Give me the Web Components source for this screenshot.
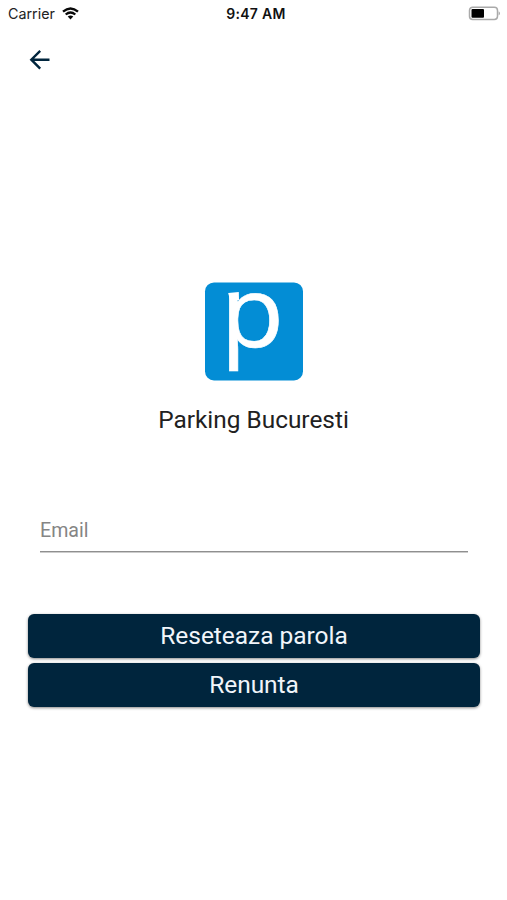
<!DOCTYPE html>
<html lang="ro"><head><meta charset="utf-8"><title>Parking Bucuresti</title>
<style>html,body{margin:0;height:100%;background:#fff}</style></head><body>
<reset-screen></reset-screen>
<script>
const define=(name,html)=>customElements.define(name,class extends HTMLElement{
  constructor(){super();this.attachShadow({mode:'open'}).innerHTML=html;}
});
define('status-bar',`<style>
:host{display:grid;grid-template-columns:1fr auto 1fr;height:27px;align-items:center;font:14.3px/27px Inter,sans-serif;color:#222;padding:0 6px 0 8px;box-sizing:border-box}
.left{display:flex;align-items:center;gap:7px}.time{font-weight:600;font-size:14px;letter-spacing:.3px;color:#111;padding-left:3px}
.right{display:flex;justify-content:flex-end}svg{display:block}
</style><div class="left"><span>Carrier</span><svg width="17" height="13" viewBox="0 0 17 13" fill="none" stroke="#080808" stroke-width="2.3"><path d="M1 4.7Q8.5-1.8 16 4.7M3.7 7.5Q8.5 3.4 13.3 7.5"/><path d="M8.5 12.4L5.7 9.5Q8.5 7.4 11.3 9.5Z" fill="#080808" stroke="none"/></svg></div>
<span class="time">9:47 AM</span>
<div class="right"><svg width="33" height="15" viewBox="0 0 33 15"><rect x="1.5" y="1.2" width="28" height="12.3" rx="3.2" fill="#fff" stroke="#aaa" stroke-width="1.5"/><rect x="3.5" y="3.1" width="12.5" height="8.6" rx="1" fill="#000"/><path d="M30.7 5.2Q33 7.4 30.7 9.5Z" fill="#999"/></svg></div>`);
define('back-button',`<style>:host{display:flex;height:65px;padding-left:28px;align-items:center;box-sizing:border-box}button{padding:0;border:0;background:none}svg{display:block}</style>
<button aria-label="Inapoi"><svg width="24" height="24" viewBox="0 0 24 24" fill="none" stroke="#00253d" stroke-width="2.4"><path d="M21.5 11.7H3.5M12.2 2.8L3.3 11.7l8.9 8.9"/></svg></button>`);
define('parking-logo',`<style>:host{display:block;width:98px;height:98px}svg{display:block;overflow:visible}text{font-family:"Open Sans",sans-serif;fill:#fff}</style>
<svg width="98" height="98" viewBox="0 0 98 98"><rect y=".4" width="98" height="98" rx="9" fill="#038dd5"/><text transform="translate(15.5 65) scale(1.05 1)" font-size="99" stroke="#fff" stroke-width=".6">p</text><path d="M23.2 11L33.8 10L34 18H25Z" fill="#fff"/></svg>`);
define('app-brand',`<style>:host{display:flex;flex-direction:column;align-items:center;gap:23px}div{font:24.4px/34px Roboto,sans-serif;color:#212121}</style><parking-logo></parking-logo><div><slot></slot></div>`);
define('text-field',`<style>:host{display:block;box-sizing:border-box;height:41px;padding-top:3px;border-bottom:1px solid #8f8f8f;box-shadow:0 1px #ccc;font:19.6px/34px Roboto,sans-serif;color:#858585}</style><slot></slot>`);
define('action-button',`<style>:host{display:block}button{display:block;width:100%;height:44px;padding:0 0 1px;border:0;border-radius:6px;background:#00253d;color:#f1f5fa;font:24.5px/43px Roboto,sans-serif;letter-spacing:-.04px;box-shadow:0 1px 3px #0007}</style><button><slot></slot></button>`);
define('reset-screen',`<style>
:host{display:flex;flex-direction:column;height:900px;background:#fff;overflow:hidden}
app-brand{margin-top:190px}text-field{margin:74px 39px 0 40px}.actions{display:grid;gap:5px;margin:62px 27px 0 28px}
</style><status-bar></status-bar><back-button></back-button><app-brand>Parking Bucuresti</app-brand><text-field>Email</text-field><div class="actions"><action-button>Reseteaza parola</action-button><action-button>Renunta</action-button></div>`);
</script></body></html>
